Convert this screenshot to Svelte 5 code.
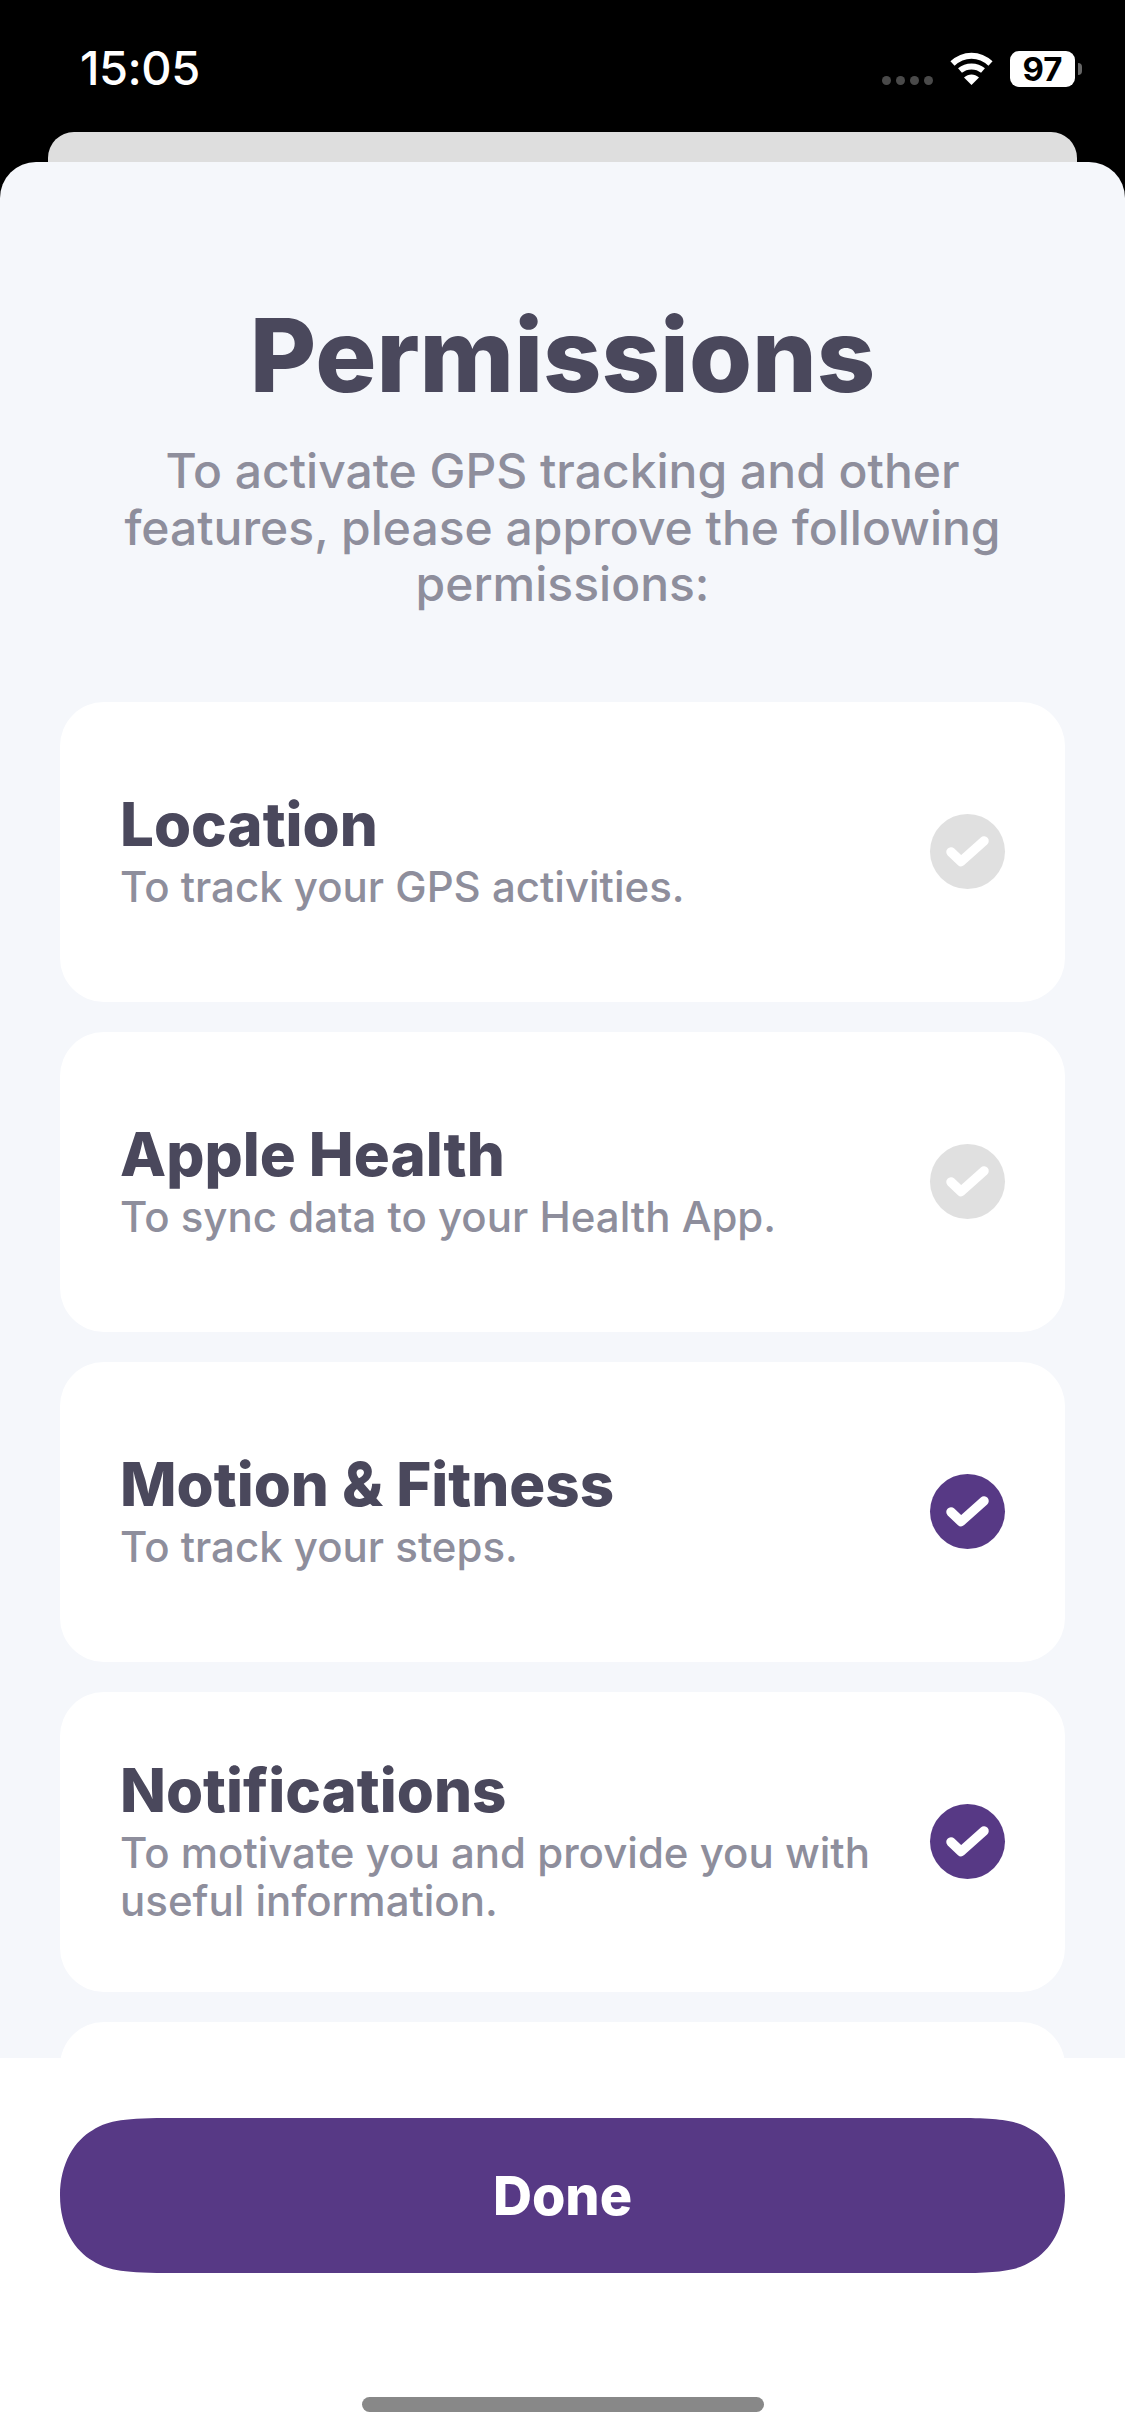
<script lang="ts">
	const permissions = [
		{ title: "Location", text: "To track your GPS activities.", granted: false },
		{ title: "Apple Health", text: "To sync data to your Health App.", granted: false },
		{ title: "Motion & Fitness", text: "To track your steps.", granted: true },
		{ title: "Notifications", text: "To motivate you and provide you with useful information.", granted: true }
	];
</script>

<div class="page">
	<header class="status">
		<span class="time">15:05</span>
		<div class="indicators">
			<div class="dots"><i></i><i></i><i></i><i></i></div>
			<svg class="wifi" viewBox="0 0 44 33" width="45" height="33" aria-hidden="true">
				<path d="M3 11.500 C14 1 30 1 41 11.500" />
				<path d="M10.500 18.500 C17 13 27 13 33.500 18.500" />
				<path class="tip" d="M22 33 L14.500 25.500 C19 21.500 25 21.500 29.500 25.500 Z" />
			</svg>
			<div class="battery">97</div>
			<div class="nub"></div>
		</div>
	</header>

	<div class="back-sheet"></div>

	<main class="sheet">
		<h1>Permissions</h1>
		<p class="intro">To activate GPS tracking and other features, please approve the following permissions:</p>

		<div class="list">
			{#each permissions as item}
				<section class="card">
					<div class="copy">
						<h2>{item.title}</h2>
						<p>{item.text}</p>
					</div>
					<div class="check" class:granted={item.granted}>
						<svg viewBox="0 0 75 75" width="75" height="75" aria-hidden="true">
							<path d="M21 38 L31 47.500 L54 27" />
						</svg>
					</div>
				</section>
			{/each}
			<section class="card"></section>
		</div>
	</main>

	<footer class="footer">
		<button class="done">Done</button>
		<div class="home-bar"></div>
	</footer>
</div>

<style>
	:global(body) {
		margin: 0;
		background: #000;
	}

	.page {
		width: 1125px;
		height: 2436px;
		display: flex;
		flex-direction: column;
		background: #000;
		font-family: Inter, "Liberation Sans", sans-serif;
		overflow: hidden;
	}

	.status {
		height: 132px;
		flex: none;
		display: flex;
		justify-content: space-between;
		align-items: flex-start;
		padding: 42px 43px 0 80px;
		box-sizing: border-box;
		color: #fff;
	}

	.time {
		font-size: 47px;
		font-weight: 500;
		line-height: 52px;
		letter-spacing: -0.5px;
	}

	.indicators {
		display: flex;
		align-items: flex-start;
		padding-top: 9px;
	}

	.dots {
		display: flex;
		gap: 5px;
		margin: 25px 16px 0 0;
	}

	.dots i {
		width: 9px;
		height: 9px;
		border-radius: 50%;
		background: #4a4a4a;
	}

	.wifi {
		margin: 1px 16px 0 0;
	}

	.wifi path {
		fill: none;
		stroke: #fff;
		stroke-width: 6px;
	}

	.wifi .tip {
		fill: #fff;
		stroke: none;
	}

	.battery {
		width: 65px;
		height: 36px;
		border-radius: 9px;
		background: #fff;
		color: #000;
		font-size: 33px;
		font-weight: 700;
		line-height: 36px;
		text-align: center;
	}

	.nub {
		width: 4px;
		height: 12px;
		margin: 12px 0 0 3px;
		border-radius: 0 4px 4px 0;
		background: #666;
	}

	.back-sheet {
		height: 30px;
		flex: none;
		margin: 0 48px;
		border-radius: 26px 26px 0 0;
		background: #dedede;
	}

	.sheet {
		height: 1896px;
		flex: none;
		box-sizing: border-box;
		padding: 0 60px;
		border-radius: 36px 36px 0 0;
		background: #f5f7fb;
		overflow: hidden;
	}

	h1 {
		margin: 133px 0 0;
		font-size: 102px;
		font-weight: 800;
		line-height: 120px;
		text-align: center;
		color: #4a485c;
	}

	.intro {
		margin: 28px auto 0;
		width: 900px;
		font-size: 48px;
		font-weight: 550;
		line-height: 56.500px;
		text-align: center;
		color: #8e8e9c;
	}

	.list {
		display: flex;
		flex-direction: column;
		gap: 30px;
		margin-top: 89px;
	}

	.card {
		height: 300px;
		flex: none;
		display: flex;
		align-items: center;
		justify-content: space-between;
		box-sizing: border-box;
		padding: 0 60px;
		border-radius: 44px;
		background: #fff;
	}

	.copy {
		width: 760px;
	}

	h2 {
		margin: 0;
		font-size: 60px;
		font-weight: 800;
		line-height: 62px;
		color: #4a485c;
	}

	.copy p {
		margin: 8px 0 0;
		font-size: 42px;
		font-weight: 550;
		line-height: 48px;
		color: #8e8e9c;
	}

	.check {
		width: 75px;
		height: 75px;
		flex: none;
		border-radius: 50%;
		background: #e0e0e0;
	}

	.check.granted {
		background: #573985;
	}

	.check svg {
		display: block;
	}

	.check path {
		fill: none;
		stroke: #fff;
		stroke-width: 9.500px;
		stroke-linecap: round;
		stroke-linejoin: round;
	}

	.footer {
		flex: 1;
		display: flex;
		flex-direction: column;
		align-items: center;
		background: #fff;
	}

	.done {
		width: 1005px;
		height: 155px;
		flex: none;
		margin-top: 60px;
		border: 0;
		clip-path: path("M105 0 H900 C945 0 960 4 972 12 C990 22 1005 45 1005 77.5 C1005 110 990 133 972 143 C960 151 945 155 900 155 H105 C60 155 45 151 33 143 C15 133 0 110 0 77.5 C0 45 15 22 33 12 C45 4 60 0 105 0 Z");
		background: #573985;
		color: #fff;
		font-family: inherit;
		font-size: 54px;
		font-weight: 800;
	}

	.home-bar {
		width: 402px;
		height: 15px;
		margin-top: 124px;
		border-radius: 8px;
		background: #888;
	}
</style>
